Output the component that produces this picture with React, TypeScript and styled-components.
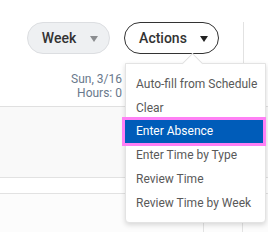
import React from "react";
import styled, { createGlobalStyle } from "styled-components";

const GlobalStyle = createGlobalStyle`
  html, body { margin: 0; padding: 0; background: #ffffff; }
  body { font-family: Roboto, "Liberation Sans", Arial, sans-serif; }
`;

const Page = styled.div`
  position: relative;
  width: 268px;
  height: 232px;
  overflow: hidden;
  background: #ffffff;
  display: flex;
  flex-direction: column;
`;

const Toolbar = styled.div`
  display: flex;
  align-items: flex-start;
  height: 63px;
  padding: 22px 0 0 27px;
  box-sizing: border-box;
  flex-shrink: 0;
`;

const PillButton = styled.button<{ $variant: "soft" | "outline" }>`
  display: flex;
  align-items: center;
  justify-content: center;
  gap: ${(p) => (p.$variant === "soft" ? "14px" : "13px")};
  height: 32px;
  width: ${(p) => (p.$variant === "soft" ? "83px" : "95px")};
  margin-left: ${(p) => (p.$variant === "soft" ? "0" : "14px")};
  padding: 0 0 0 ${(p) => (p.$variant === "soft" ? "3px" : "4px")};
  box-sizing: border-box;
  border-radius: 16px;
  border: 1px solid ${(p) => (p.$variant === "soft" ? "#dcdee1" : "#333333")};
  background: ${(p) => (p.$variant === "soft" ? "#eef0f2" : "#ffffff")};
  color: #333333;
  font-family: Roboto, "Liberation Sans", Arial, sans-serif;
  font-size: 14px;
  font-weight: 500;
  cursor: pointer;
`;

const Caret = styled.span<{ $tone: "muted" | "dark" }>`
  display: inline-block;
  width: 0;
  height: 0;
  border-left: 4px solid transparent;
  border-right: 4px solid transparent;
  border-top: 6px solid ${(p) => (p.$tone === "muted" ? "#8b8d90" : "#222222")};
  margin-top: 1px;
`;

const ToolbarEnd = styled.div`
  margin-left: auto;
  width: 25px;
  height: 41px;
  border-left: 1px solid #e2e2e2;
  box-sizing: border-box;
`;

const DayHeader = styled.div`
  height: 44px;
  border-bottom: 1px solid #e0e0e0;
  flex-shrink: 0;
  box-sizing: border-box;
  display: flex;
`;

const DayLabel = styled.div`
  width: 122px;
  padding-top: 9px;
  text-align: right;
  font-size: 12px;
  line-height: 14px;
  color: #6a798c;
`;

const Band = styled.div<{ $h: number; $bg: string }>`
  height: ${(p) => p.$h}px;
  background: ${(p) => p.$bg};
  border-bottom: 1px solid #e2e2e2;
  flex-shrink: 0;
`;

const GridRow = styled.div`
  flex: 1;
  display: grid;
  grid-template-columns: 204px 39px 1fr;
  background: #fcfcfc;
`;

const GridCell = styled.div<{ $line: boolean }>`
  border-right: ${(p) => (p.$line ? "1px solid #e2e2e2" : "none")};
`;

const Menu = styled.div`
  position: absolute;
  left: 125px;
  top: 63px;
  width: 141px;
  height: 160px;
  box-sizing: border-box;
  background: #ffffff;
  border: 1px solid #e3e3e3;
  border-radius: 0 0 4px 4px;
  box-shadow: 0 2px 5px rgba(0, 0, 0, 0.15);
  padding: 8px 0 7px 0;
  display: flex;
  flex-direction: column;
`;

const MenuArrow = styled.div`
  position: absolute;
  left: 59px;
  top: -8px;
  width: 14px;
  height: 14px;
  background: #ffffff;
  border-top: 1px solid #e0e0e0;
  border-left: 1px solid #e0e0e0;
  transform: rotate(45deg);
`;

const MenuItem = styled.div<{ $active?: boolean }>`
  position: relative;
  height: ${(p) => (p.$active ? "23px" : "24px")};
  margin: ${(p) => (p.$active ? "0 2px 1px -1px" : "0")};
  padding-left: ${(p) => (p.$active ? "11px" : "10px")};
  display: flex;
  align-items: center;
  font-size: 12px;
  color: ${(p) => (p.$active ? "#ffffff" : "#595959")};
  background: ${(p) => (p.$active ? "#005cb9" : "transparent")};
  outline: ${(p) => (p.$active ? "3px solid #ff80f5" : "none")};
  white-space: nowrap;
`;

const items = [
  "Auto-fill from Schedule",
  "Clear",
  "Enter Absence",
  "Enter Time by Type",
  "Review Time",
  "Review Time by Week",
];

export default function App() {
  return (
    <>
      <GlobalStyle />
      <Page>
        <Toolbar>
          <PillButton $variant="soft">
            Week <Caret $tone="muted" />
          </PillButton>
          <PillButton $variant="outline">
            Actions <Caret $tone="dark" />
          </PillButton>
          <ToolbarEnd />
        </Toolbar>
        <DayHeader>
          <DayLabel>
            Sun, 3/16
            <br />
            Hours: 0
          </DayLabel>
        </DayHeader>
        <Band $h={70} $bg="#f9f9f9" />
        <Band $h={15} $bg="#ffffff" />
        <GridRow>
          <GridCell $line />
          <GridCell $line />
          <GridCell $line={false} />
        </GridRow>
        <Menu>
          <MenuArrow />
          {items.map((t) => (
            <MenuItem key={t} $active={t === "Enter Absence"}>
              {t}
            </MenuItem>
          ))}
        </Menu>
      </Page>
    </>
  );
}
